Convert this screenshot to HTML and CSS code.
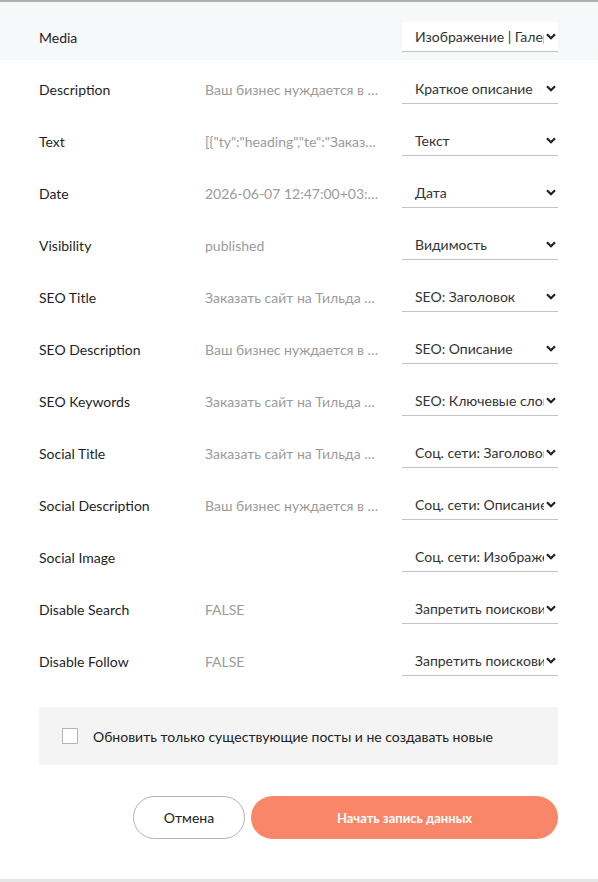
FILE: index.html
```html
<!DOCTYPE html>
<html lang="ru">

<head>
    <meta charset="UTF-8">
    <meta name="viewport" content="width=device-width, initial-scale=1.0">
    <title>Импорт данных</title>
    <link rel="stylesheet" href="styles.css">
</head>

<body>
    <div class="modal">
        <div class="fields">
            <div class="row row-first">
                <div class="label">Media</div>
                <div class="value"></div>
                <div class="select select-white"><span>Изображение | Галерея</span></div>
            </div>
            <div class="row">
                <div class="label">Description</div>
                <div class="value">Ваш бизнес нуждается в сайте, который будет</div>
                <div class="select"><span>Краткое описание</span></div>
            </div>
            <div class="row">
                <div class="label">Text</div>
                <div class="value">[{"ty":"heading","te":"Заказать сайт</div>
                <div class="select"><span>Текст</span></div>
            </div>
            <div class="row">
                <div class="label">Date</div>
                <div class="value">2026-06-07 12:47:00+03:00</div>
                <div class="select"><span>Дата</span></div>
            </div>
            <div class="row">
                <div class="label">Visibility</div>
                <div class="value">published</div>
                <div class="select"><span>Видимость</span></div>
            </div>
            <div class="row">
                <div class="label">SEO Title</div>
                <div class="value">Заказать сайт на Тильда под ключ</div>
                <div class="select"><span>SEO: Заголовок</span></div>
            </div>
            <div class="row">
                <div class="label">SEO Description</div>
                <div class="value">Ваш бизнес нуждается в сайте, который будет</div>
                <div class="select"><span>SEO: Описание</span></div>
            </div>
            <div class="row">
                <div class="label">SEO Keywords</div>
                <div class="value">Заказать сайт на Тильда под ключ</div>
                <div class="select"><span>SEO: Ключевые слова</span></div>
            </div>
            <div class="row">
                <div class="label">Social Title</div>
                <div class="value">Заказать сайт на Тильда под ключ</div>
                <div class="select"><span>Соц. сети: Заголовок</span></div>
            </div>
            <div class="row">
                <div class="label">Social Description</div>
                <div class="value">Ваш бизнес нуждается в сайте, который будет</div>
                <div class="select"><span>Соц. сети: Описание</span></div>
            </div>
            <div class="row">
                <div class="label">Social Image</div>
                <div class="value"></div>
                <div class="select"><span>Соц. сети: Изображение</span></div>
            </div>
            <div class="row">
                <div class="label">Disable Search</div>
                <div class="value">FALSE</div>
                <div class="select"><span>Запретить поисковикам</span></div>
            </div>
            <div class="row">
                <div class="label">Disable Follow</div>
                <div class="value">FALSE</div>
                <div class="select"><span>Запретить поисковикам</span></div>
            </div>
        </div>

        <label class="option">
            <span class="checkbox"></span>
            <span>Обновить только существующие посты и не создавать новые</span>
        </label>

        <div class="actions">
            <button type="button" class="btn btn-cancel">Отмена</button>
            <button type="button" class="btn btn-start">Начать запись данных</button>
        </div>
    </div>
</body>

</html>
```

FILE: styles.css
```css
body {
    margin: 0;
    background-color: #ffffff;
    font-family: "Lato", "Noto Sans", sans-serif;
    color: #1e1e1e;
}

.modal {
    width: 598px;
    height: 882px;
    border-top: 2px solid #a9b4ad;
    border-bottom: 3px solid #e6e6e6;
    box-sizing: border-box;
}

.row {
    display: flex;
    align-items: center;
    height: 52px;
    padding: 0 40px 0 39px;
    font-size: 14px;
}

.row-first {
    height: 58px;
    box-sizing: border-box;
    padding-top: 12px;
    margin-bottom: 3px;
    background-color: #f7f8fa;
}

.label {
    width: 166px;
    flex-shrink: 0;
}

.value {
    width: 176px;
    margin-right: 21px;
    color: #9b9b9b;
    white-space: nowrap;
    overflow: hidden;
    text-overflow: ellipsis;
}

.select {
    position: relative;
    width: 156px;
    height: 30px;
    box-sizing: border-box;
    padding: 0 0 0 13px;
    border-bottom: 1px solid #c4c4c4;
    display: flex;
    align-items: center;
    color: #333333;
    overflow: hidden;
    white-space: nowrap;
}

.select-white {
    background-color: #ffffff;
}

.select::after {
    content: "";
    position: absolute;
    right: 0;
    top: 0;
    width: 14px;
    height: 29px;
    background: #ffffff url("data:image/svg+xml;utf8,<svg xmlns='http://www.w3.org/2000/svg' width='10' height='7' viewBox='0 0 10 7'><path d='M1 1.2 L5 5.2 L9 1.2' fill='none' stroke='%23222' stroke-width='2.2'/></svg>") no-repeat 2px center;
}

.option {
    display: flex;
    align-items: center;
    gap: 15px;
    margin: 20px 40px 0 39px;
    height: 58px;
    padding-left: 23px;
    background-color: #f4f4f4;
    font-size: 14px;
    color: #222222;
}

.checkbox {
    width: 14px;
    height: 14px;
    border: 1px solid #b5b5b5;
    background-color: #ffffff;
}

.actions {
    display: flex;
    justify-content: flex-end;
    gap: 6px;
    margin: 31px 40px 0 39px;
}

.btn {
    height: 43px;
    border-radius: 22px;
    font-family: "Lato", "Noto Sans", sans-serif;
    font-size: 14px;
    cursor: pointer;
}

.btn-cancel {
    width: 112px;
    background: #ffffff;
    border: 1px solid #b3b3b3;
    color: #222222;
}

.btn-start {
    width: 307px;
    background: #fa8669;
    border: none;
    color: #ffffff;
    font-size: 13px;
    font-weight: 700;
}
```
